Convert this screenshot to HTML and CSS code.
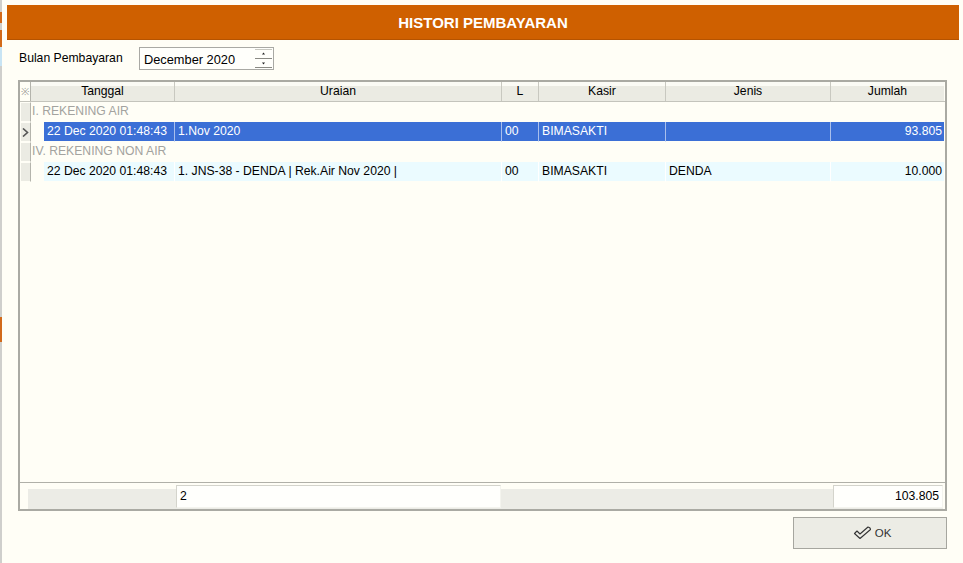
FILE: index.html
```html
<!DOCTYPE html>
<html>
<head>
<meta charset="utf-8">
<title>Histori Pembayaran</title>
<link rel="stylesheet" href="styles.css">
</head>
<body>
<div class="desktop">
  <div class="strip">
    <div class="seg g1"></div>
    <div class="seg o1"></div>
    <div class="seg g2"></div>
    <div class="seg o2"></div>
    <div class="seg b1"></div>
    <div class="seg g3"></div>
    <div class="seg o3"></div>
    <div class="seg g4"></div>
  </div>
  <div class="window">
    <div class="titlebar">HISTORI PEMBAYARAN</div>
    <div class="content">
      <div class="filter">
        <span class="label">Bulan Pembayaran</span>
        <div class="spin">
          <span class="spin-text">December 2020</span>
          <svg class="spin-btns" width="17" height="19" viewBox="0 0 17 19">
            <line x1="0" y1="0.5" x2="17" y2="0.5" stroke="#c8c8c0"/>
            <line x1="0" y1="9.5" x2="17" y2="9.5" stroke="#8a8a84"/>
            <line x1="0" y1="18.5" x2="17" y2="18.5" stroke="#8a8a84"/>
            <path d="M8.5 3.5 L10 5.5 L7 5.5 Z" fill="#222"/>
            <path d="M7 13.5 L10 13.5 L8.5 15.5 Z" fill="#222"/>
          </svg>
        </div>
      </div>

      <div class="grid">
        <div class="row head">
          <div class="ind hind">※</div>
          <div class="hc span2">Tanggal</div>
          <div class="hc">Uraian</div>
          <div class="hc">L</div>
          <div class="hc">Kasir</div>
          <div class="hc">Jenis</div>
          <div class="hc last">Jumlah</div>
        </div>

        <div class="row group">
          <div class="ind"></div>
          <div class="gc">I. REKENING AIR</div>
        </div>

        <div class="row data sel">
          <div class="ind cur">
            <svg width="7" height="9" viewBox="0 0 7 9"><path d="M1 0.5 L5.5 4.5 L1 8.5" fill="none" stroke="#555" stroke-width="1.6"/></svg>
          </div>
          <div class="indent"></div>
          <div class="c">22 Dec 2020 01:48:43</div>
          <div class="c">1.Nov 2020</div>
          <div class="c">00</div>
          <div class="c">BIMASAKTI</div>
          <div class="c"></div>
          <div class="c num last">93.805</div>
        </div>

        <div class="row group">
          <div class="ind"></div>
          <div class="gc">IV. REKENING NON AIR</div>
        </div>

        <div class="row data alt">
          <div class="ind"></div>
          <div class="indent"></div>
          <div class="c">22 Dec 2020 01:48:43</div>
          <div class="c">1. JNS-38 - DENDA | Rek.Air Nov 2020 |</div>
          <div class="c">00</div>
          <div class="c">BIMASAKTI</div>
          <div class="c">DENDA</div>
          <div class="c num last">10.000</div>
        </div>

        <div class="fill"></div>

        <div class="footer">
          <div></div>
          <div class="fcell">2</div>
          <div></div>
          <div class="fcell num">103.805</div>
        </div>
      </div>

      <div class="actions">
        <button class="ok" type="button">
          <svg width="19" height="14" viewBox="0 0 19 14"><path d="M1.5 7.5 L4 5 L7 8 L15 1 Q17.5 1.5 17.5 3.5 L7 12.5 Z" fill="none" stroke="#333" stroke-width="1.1" stroke-linejoin="round"/></svg>
          <span>OK</span>
        </button>
      </div>
    </div>
  </div>
</div>
</body>
</html>
```

FILE: styles.css
```css
* { box-sizing: border-box; }

html, body {
  margin: 0;
  padding: 0;
  background: #fffef6;
  font-family: "Liberation Sans", Arial, sans-serif;
  font-size: 12px;
  color: #000;
}

.desktop {
  display: flex;
  width: 963px;
  height: 563px;
  overflow: hidden;
}

.strip {
  width: 2px;
  display: flex;
  flex-direction: column;
}
.seg { width: 2px; background: #cfcfcc; }
.g1 { height: 12px; }
.o1 { height: 11px; background: #d26a1a; }
.g2 { height: 7px; }
.o2 { height: 17px; background: #d26a1a; }
.b1 { height: 19px; background: #c8e4f4; }
.g3 { height: 251px; }
.o3 { height: 25px; background: #d26a1a; }
.g4 { flex: 1; }

.window {
  flex: 1;
  padding: 5px 5px 0 5px;
  display: flex;
  flex-direction: column;
}

.titlebar {
  height: 35px;
  background: #cf6000;
  border-bottom: 1px solid #b55300;
  color: #fff;
  font-weight: bold;
  font-size: 15px;
  display: flex;
  align-items: center;
  justify-content: center;
  padding-top: 1px;
}

.content {
  padding: 0 12px 0 11px;
  display: flex;
  flex-direction: column;
}

.filter {
  display: flex;
  align-items: center;
  margin-top: 7px;
  height: 23px;
}
.label {
  margin-left: 1px;
  width: 120px;
  font-size: 12.2px;
  padding-bottom: 2px;
}
.spin {
  width: 135px;
  height: 23px;
  border: 1px solid #a9a9a4;
  background: #fffffb;
  display: flex;
  align-items: center;
  justify-content: space-between;
  padding: 0 1px 0 4px;
}
.spin-text { padding-top: 1px; font-size: 12.8px; }
.spin-btns { display: block; }

/* grid */
.grid {
  margin-top: 10px;
  height: 431px;
  border: 2px solid #aaaaa3;
  display: flex;
  flex-direction: column;
  background: #fffef6;
}

.row {
  display: grid;
  grid-template-columns: 11px 13px 131px 327px 37px 127px 165px 114px;
  height: 20px;
  flex: none;
}

.head {
  height: 20px;
  border-bottom: 1px solid #c4c4bc;
}
.hc {
  background: linear-gradient(#fbfbf5 0 4px, #ebebe3 4px);
  border-right: 1px solid #c8c8c0;
  text-align: center;
  line-height: 19px;
  font-size: 12.2px;
}
.hc.last { border-right: none; margin-right: 1px; }
.span2 { grid-column: span 2; }

.ind {
  background: #ebebe3;
  border-right: 1px solid #b4b4ac;
  border-bottom: 1px solid #fffef6;
  border-top: 1px solid #fffef6;
  border-left: 1px solid #fffef6;
  display: flex;
  align-items: center;
  justify-content: center;
}
.hind {
  background: #fffef6;
  border: none;
  border-right: 1px solid #b4b4ac;
  color: #a0a09a;
  font-size: 10px;
  line-height: 19px;
}

.gc {
  grid-column: 2 / -1;
  color: #a3a39f;
  font-size: 12.2px;
  line-height: 19px;
  padding-left: 1px;
}

.c {
  font-size: 12.2px;
  line-height: 19px;
  padding-left: 3px;
  white-space: nowrap;
  overflow: hidden;
  border-bottom: 1px solid #fffef6;
}
.c.num { text-align: right; padding: 0 2px 0 0; }
.c.last { margin-right: 1px; }

.sel .c {
  background: #3b6fd6;
  color: #fff;
  border-right: 1px solid #a9bfec;
}
.sel .c.last { border-right: none; }

.alt .c {
  background: #ebfbff;
  border-right: 1px solid #ffffff;
}
.alt .c.last { border-right: none; }

.fill {
  flex: 1;
  border-bottom: 1px solid #b0b0a8;
}

.footer {
  height: 26px;
  flex: none;
  display: grid;
  grid-template-columns: 156px 325px 332px 110px;
  padding-top: 2px;
  background: linear-gradient(#ecece6, #ecece6) 8px 6px / 915px 20px no-repeat;
}
.fcell {
  height: 23px;
  background: #fffffc;
  border: 1px solid #d4d4cc;
  border-right-color: #f4f4ee;
  border-bottom-color: #f4f4ee;
  line-height: 21px;
  padding-left: 3px;
  font-size: 12.2px;
}
.fcell.num { text-align: right; padding: 0 3px 0 0; }

.actions {
  display: flex;
  justify-content: flex-end;
  margin-top: 6px;
}
.ok {
  width: 154px;
  height: 32px;
  background: #ececE5;
  border: 1px solid #a6a69f;
  border-radius: 0;
  font-family: "Liberation Sans", Arial, sans-serif;
  font-size: 11.5px;
  color: #333;
  display: flex;
  align-items: center;
  justify-content: center;
  gap: 3px;
  padding: 0 0 0 4px;
}
.ok svg { display: block; }
```
